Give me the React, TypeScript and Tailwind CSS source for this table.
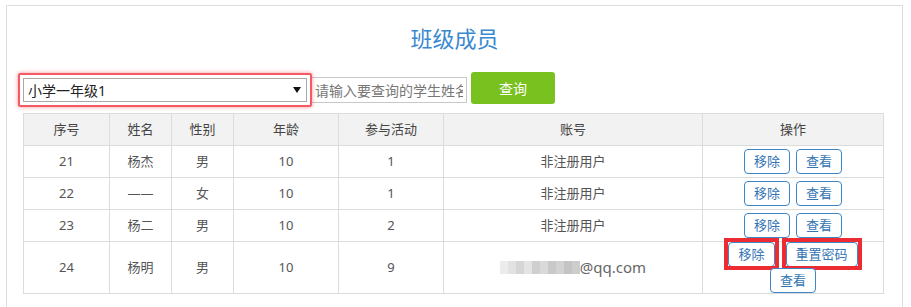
import { ReactNode } from 'react'

interface Member {
  id: number
  name: string
  gender: string
  age: number
  activities: number
  account: string
}

const members: Member[] = [
  { id: 21, name: '杨杰', gender: '男', age: 10, activities: 1, account: '非注册用户' },
  { id: 22, name: '——', gender: '女', age: 10, activities: 1, account: '非注册用户' },
  { id: 23, name: '杨二', gender: '男', age: 10, activities: 2, account: '非注册用户' },
]

// 打码的邮箱前缀
const maskShades = ['#ececec', '#e2e2e2', '#d6d6d6', '#e4e4e4', '#cfcfcf', '#d9d9d9', '#c9c9c9', '#d2d2d2', '#c4c4c4', '#cdcdcd']

const FONT = "font-['Noto_Sans','Noto_Sans_CJK_SC',sans-serif]"

function OpButton({ children, marked }: { children: ReactNode; marked?: boolean }) {
  return (
    <span className="relative inline-block">
      <button className="h-[25px] px-[9px] bg-white border border-[#3f86c6] rounded-[4px] text-[13px] leading-none text-[#3474b4]">
        {children}
      </button>
      {marked && (
        <span className="absolute -left-[4px] -top-[4px] -right-[4px] -bottom-[3px] border-[4px] border-[#ec2b33] pointer-events-none" />
      )}
    </span>
  )
}

const th = 'border border-[#dcdcdc] h-[32px] font-normal text-[13px] text-[#444] text-center'
const td = 'border border-[#dcdcdc] h-[32px] text-[13px] text-[#555] text-center'

export default function ClassMembers() {
  return (
    <div className={`min-h-screen bg-white pt-[5px] pl-[6px] ${FONT}`}>
      <div className="w-[897px] border border-[#dedede] pt-5 pb-8 px-4">
        {/* 标题 */}
        <h2 className="text-center text-[22px] leading-[24px] text-[#3a88d0]">班级成员</h2>

        {/* 查询条件 */}
        <div className="mt-[22px] flex items-start">
          <div className="relative mt-[6px]">
            <select
              className="block w-[284px] h-[24px] pl-[4px] appearance-none border border-[#a9a9a9] bg-white text-[14px] text-[#222] outline-none"
              defaultValue="1"
            >
              <option value="1">小学一年级1</option>
            </select>
            <svg className="absolute right-[6px] top-[9px] pointer-events-none" width="8" height="6" viewBox="0 0 8 6">
              <path d="M0 0h8L4 6z" fill="#111" />
            </svg>
            <span className="absolute -left-[5px] -top-[5px] -right-[5px] -bottom-[5px] border-2 border-[#f35a64] rounded-[2px] shadow-[0_0_4px_rgba(240,60,70,0.55)] pointer-events-none" />
          </div>
          <input
            className="ml-[4px] mt-[5px] w-[156px] h-[26px] border border-[#c8c8c8] px-[3px] text-[14px] placeholder:text-[#777] outline-none"
            placeholder="请输入要查询的学生姓名"
          />
          <button className="ml-[4px] w-[84px] h-[32px] rounded-[3px] bg-[#79c11f] text-white text-[14px]">查询</button>
        </div>

        {/* 成员列表 */}
        <table className="mt-[9px] w-[861px] table-fixed border-collapse">
          <colgroup>
            <col className="w-[86px]" />
            <col className="w-[62px]" />
            <col className="w-[62px]" />
            <col className="w-[105px]" />
            <col className="w-[105px]" />
            <col className="w-[259px]" />
            <col />
          </colgroup>
          <thead>
            <tr className="bg-[#f2f2f2]">
              <th className={th}>序号</th>
              <th className={th}>姓名</th>
              <th className={th}>性别</th>
              <th className={th}>年龄</th>
              <th className={th}>参与活动</th>
              <th className={th}>账号</th>
              <th className={th}>操作</th>
            </tr>
          </thead>
          <tbody>
            {members.map((m) => (
              <tr key={m.id}>
                <td className={td}>{m.id}</td>
                <td className={td}>{m.name}</td>
                <td className={td}>{m.gender}</td>
                <td className={td}>{m.age}</td>
                <td className={td}>{m.activities}</td>
                <td className={td}>{m.account}</td>
                <td className={td}>
                  <div className="flex justify-center gap-[6px]">
                    <OpButton>移除</OpButton>
                    <OpButton>查看</OpButton>
                  </div>
                </td>
              </tr>
            ))}
            <tr>
              <td className={`${td} h-[51px]`}>24</td>
              <td className={td}>杨明</td>
              <td className={td}>男</td>
              <td className={td}>10</td>
              <td className={td}>9</td>
              <td className={td}>
                <span className="inline-flex items-center">
                  <span className="flex h-[13px] blur-[0.4px]">
                    {maskShades.map((c, i) => (
                      <span key={i} className="w-[8px] h-full" style={{ backgroundColor: c }} />
                    ))}
                  </span>
                  <span className="text-[15px] text-[#666]">@qq.com</span>
                </span>
              </td>
              <td className={`${td} p-0`}>
                <div className="flex flex-col items-center">
                  <div className="flex justify-center gap-[11px]">
                    <OpButton marked>移除</OpButton>
                    <OpButton marked>重置密码</OpButton>
                  </div>
                  <div className="mt-[1px] leading-none">
                    <OpButton>查看</OpButton>
                  </div>
                </div>
              </td>
            </tr>
          </tbody>
        </table>
      </div>
    </div>
  )
}
